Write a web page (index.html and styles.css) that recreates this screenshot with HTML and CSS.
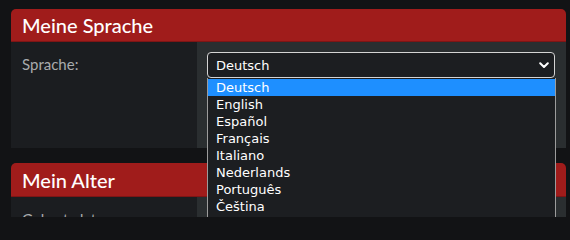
FILE: index.html
```html
<!DOCTYPE html>
<html lang="de">
<head>
<meta charset="utf-8">
<title>Einstellungen</title>
<link rel="stylesheet" href="styles.css">
</head>
<body>
<div class="page">
  <section class="card">
    <h2 class="card-head">Meine Sprache</h2>
    <div class="card-body">
      <div class="label-col">Sprache:</div>
      <div class="field-col">
        <div class="select-wrap">
          <div class="select-box">
            <span>Deutsch</span>
            <svg class="chev" width="10" height="7" viewBox="0 0 10 7"><path d="M1.2 1.2 L5 5 L8.8 1.2" fill="none" stroke="#fff" stroke-width="2" stroke-linecap="round" stroke-linejoin="round"/></svg>
          </div>
          <ul class="dropdown">
            <li class="opt active">Deutsch</li>
            <li class="opt">English</li>
            <li class="opt">Español</li>
            <li class="opt">Français</li>
            <li class="opt">Italiano</li>
            <li class="opt">Nederlands</li>
            <li class="opt">Português</li>
            <li class="opt">Čeština</li>
          </ul>
        </div>
      </div>
    </div>
  </section>
  <section class="card">
    <h2 class="card-head head-2">Mein Alter</h2>
    <div class="card-body body-2">
      <div class="label-col">Geburtsdatum:</div>
      <div class="field-col"></div>
    </div>
  </section>
</div>
</body>
</html>
```
FILE: styles.css
```css
html, body {
  margin: 0;
  padding: 0;
  background: #121315;
}
.page {
  padding: 9px 4px 0 11px;
  height: 217px;
  box-sizing: border-box;
  overflow: hidden;
  display: flex;
  flex-direction: column;
  gap: 15px;
}
.card {
  display: flex;
  flex-direction: column;
  flex: none;
}
.card-head {
  margin: 0;
  height: 33px;
  background: #a01c1b;
  border-radius: 5px 5px 0 0;
  color: #fff;
  font-family: Lato, "Open Sans", sans-serif;
  font-weight: 500;
  font-size: 20px;
  line-height: 33px;
  padding-left: 11px;
  box-shadow: inset 0 -1px 0 #7e1515;
}
.head-2 {
  height: 34px;
  line-height: 34px;
}
.card-body {
  display: grid;
  grid-template-columns: 186px 1fr;
  height: 106px;
}
.body-2 {
  height: 20px;
  overflow: hidden;
}
.label-col {
  background: #1b1d20;
  color: #a9abad;
  font-family: Lato, "Open Sans", sans-serif;
  font-size: 15px;
  line-height: 18px;
  padding: 13px 0 0 11px;
}
.field-col {
  background: #2a2e30;
  padding: 10px 11px 0 10px;
}
.select-wrap {
  position: relative;
}
.select-box {
  height: 26px;
  box-sizing: border-box;
  border: 1px solid #d4d4d4;
  border-radius: 4px;
  background: #1c1e21;
  color: #fff;
  font-family: "DejaVu Sans", Verdana, sans-serif;
  font-size: 13px;
  display: flex;
  align-items: center;
  justify-content: space-between;
  padding: 0 5px 0 8px;
}
.chev {
  display: block;
}
.dropdown {
  position: absolute;
  top: 26px;
  left: 0;
  right: -1px;
  height: 139px;
  box-sizing: border-box;
  overflow: hidden;
  margin: 0;
  padding: 1px 0 0;
  list-style: none;
  background: #1c1e21;
  border-left: 1px solid #9c9c9c;
  border-right: 1px solid #9c9c9c;
  z-index: 5;
}
.opt {
  color: #fff;
  font-family: "DejaVu Sans", Verdana, sans-serif;
  font-size: 13px;
  line-height: 17px;
  height: 17px;
  padding-left: 8px;
}
.opt.active {
  background: #1e8fff;
}
```
